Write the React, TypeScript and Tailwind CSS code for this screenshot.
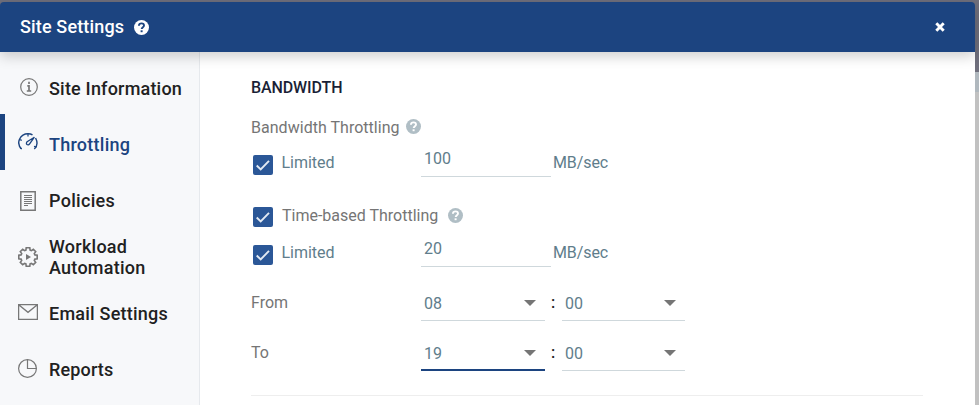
import { FC, ReactNode } from "react";

interface NavItemProps {
  label: string;
  icon: ReactNode;
  spacing: string;
  active?: boolean;
}

const InfoIcon = () => (
  <svg width="18" height="18" viewBox="0 0 18 18" fill="none" stroke="#777" className="ml-0.5 mt-px">
    <circle cx="9" cy="9" r="8.3" strokeWidth="1.2" />
    <path d="M9 3.800v2.100M7.300 7.800H9v5.200M6.800 13h4.400" strokeWidth="1.700" />
  </svg>
);

const GaugeIcon = () => (
  <svg width="20" height="18" viewBox="0 0 20 18" fill="none" stroke="#1c4480" strokeWidth="1.4">
    <path d="M3.600 16C1 13.500 0 9.800 1.500 6.200 3.400 2.300 7 .7 10 .7c1.800 0 3.300.4 4.500 1.200M17.600 5c1.800 3.600 2 8-1.300 11" />
    <path d="M10 .8v2.700M1.500 6.500l2.300.9M16 13.300l2.400.8M3.800 15.800l-1.800-.8" strokeWidth="1.200" />
    <path d="M16.400 4.200 11.800 10.700c-.8 1.200-2 1.400-2.800.8-.9-.7-.7-1.900.1-2.800z" strokeWidth="1.300" />
  </svg>
);

const DocIcon = () => (
  <svg width="16" height="20" viewBox="0 0 16 20" fill="none" stroke="#777" className="ml-0.5 mt-1.5">
    <path d="M.8.8h14.400v18.400H.8z" strokeWidth="1.500" />
    <path d="M4 4.500h8M4 6.500h8M4 8.500h8M4 10.500h8M4 12.500h8M4 14.500h4" strokeWidth="1" />
  </svg>
);

const GearIcon = () => (
  <svg width="20" height="20" viewBox="0 0 20 20" fill="none" stroke="#777" strokeWidth="1.600" className="mt-1.5">
    <path d="M8.200.8h3.600l.3 2.300 1.300.6 1.900-1.400 2.400 2.400-1.400 1.900.6 1.300 2.300.3v3.600l-2.300.3-.6 1.300 1.400 1.900-2.400 2.400-1.900-1.400-1.300.6-.3 2.300H8.200l-.3-2.300-1.300-.6-1.900 1.400-2.400-2.400 1.400-1.900-.6-1.300-2.300-.3V8.200l2.300-.3.6-1.300-1.400-1.900 2.400-2.400 1.900 1.400 1.300-.6z" />
    <path d="M8 7v6l5-3z" fill="#777" stroke="none" />
  </svg>
);

const MailIcon = () => (
  <svg width="20" height="16" viewBox="0 0 20 16" fill="none" stroke="#777" strokeWidth="1.300" className="mt-1">
    <path d="M.6.6h18.800v14.800H.6zM1 1l9 7.300L19 1" />
  </svg>
);

const PieIcon = () => (
  <svg width="19" height="19" viewBox="0 0 19 19" fill="none" stroke="#777" strokeWidth="1.200" className="mt-1">
    <circle cx="9.500" cy="9.500" r="8.900" />
    <path d="M9.500.5v9h9" />
  </svg>
);

const HelpIcon: FC<{ light?: boolean }> = ({ light }) => (
  <svg width="15" height="15" viewBox="0 0 15 15" fill="none">
    <circle cx="7.500" cy="7.500" r="7.500" fill={light ? "#fff" : "#b0bec5"} />
    <path
      d="M4.900 5.700c.1-1.500 1.200-2.300 2.600-2.300s2.500.8 2.500 2c0 1.800-2.300 1.700-2.300 3.700"
      stroke={light ? "#1c4480" : "#fff"}
      strokeWidth="1.900"
    />
    <path d="M6.600 10.300h2v1.900h-2z" fill={light ? "#1c4480" : "#fff"} />
  </svg>
);

const NavItem: FC<NavItemProps> = ({ label, icon, spacing, active }) => (
  <li
    className={`flex h-14 items-center border-l-[5px] ${
      active ? "border-[#1c4480] text-[#1c4480]" : "border-transparent text-[#212121]"
    }`}
  >
    <span className="ml-[13px] flex w-5 shrink-0">{icon}</span>
    <span className={`ml-[11px] mt-[5px] w-[142px] text-lg leading-[21px] font-medium ${spacing}`}>{label}</span>
  </li>
);

const Checkbox = () => (
  <span className="flex h-5 w-5 shrink-0 rounded-xs bg-[#2b5797]">
    <svg width="20" height="20" viewBox="0 0 20 20" fill="none">
      <path d="M3.700 10.500l4 4 8.300-8.700" stroke="#e3eaf3" strokeWidth="1.900" />
    </svg>
  </span>
);

const LimitRow: FC<{ value: string }> = ({ value }) => (
  <div className="flex h-[30px] text-[#607d8b]">
    <div className="flex w-[170px] pl-[2.4px]">
      <div className="mt-2">
        <Checkbox />
      </div>
      <span className="ml-2 mt-[5px]">Limited</span>
    </div>
    <div className="w-[130px] border-b border-[#cfd8dc] pl-[3px] pt-px">{value}</div>
    <span className="ml-[2px] mt-[5px] tracking-[-0.1px]">MB/sec</span>
  </div>
);

const Select: FC<{ value: string; width: string; focused?: boolean }> = ({ value, width, focused }) => (
  <div
    className={`flex h-[30px] justify-between pl-[3px] pr-[9.500px] text-[#607d8b] ${width} ${
      focused ? "border-b-2 border-[#1c4480]" : "border-b border-[#cfd8dc]"
    }`}
  >
    <span className="mt-0.5">{value}</span>
    <svg width="12" height="6" viewBox="0 0 12 6" className="mt-[9px]">
      <path d="M0 0h12L6 6z" fill="#757575" />
    </svg>
  </div>
);

const TimeRow: FC<{ label: string; hour: string; focused?: boolean }> = ({ label, hour, focused }) => (
  <div className="flex h-[50px]">
    <span className="w-[170px] pt-px text-[#757575]">{label}</span>
    <Select value={hour} width="w-[124px]" focused={focused} />
    <span className="w-[17px] pl-[6px] pt-px font-medium text-[#212121]">:</span>
    <Select value="00" width="w-[123px]" />
  </div>
);

const App = () => {
  return (
    <div className="flex h-[405px] w-[979px] overflow-hidden bg-[#6f6f7c] pt-0.5 font-['Roboto',sans-serif] text-base leading-[22px]">
      <div className="flex w-[975px] flex-col">
        <header className="z-10 flex h-[50px] shrink-0 items-center rounded-t-sm bg-[#1c4480] pl-5 pr-[30px] text-white shadow-[0_4px_14px_rgba(0,0,0,0.2)]">
          <h1 className="w-[114px] text-lg font-medium tracking-[0.15px]">Site Settings</h1>
          <HelpIcon light />
          <svg width="10" height="10" viewBox="0 0 10 10" className="ml-auto">
            <path d="M1.300 1.300l7.400 7.400M8.700 1.300l-7.400 7.400" stroke="#fff" strokeWidth="2.900" />
          </svg>
        </header>
        <div className="flex flex-1 bg-white">
          <nav className="w-[200px] border-r border-[#e6e9ed] bg-[#f7f8fa] pt-1.5">
            <ul>
              <NavItem label="Site Information" icon={<InfoIcon />} spacing="tracking-[0.2px]" />
              <NavItem label="Throttling" icon={<GaugeIcon />} spacing="tracking-[0.25px]" active />
              <NavItem label="Policies" icon={<DocIcon />} spacing="tracking-[0.3px]" />
              <NavItem label="Workload Automation" icon={<GearIcon />} spacing="tracking-[0.25px]" />
              <NavItem label="Email Settings" icon={<MailIcon />} spacing="tracking-[0.22px] pt-0.5" />
              <NavItem label="Reports" icon={<PieIcon />} spacing="tracking-[0.15px] pt-0.5" />
            </ul>
          </nav>
          <main className="ml-[51px] w-[672px] pt-[25px]">
            <h2 className="h-[39px] font-medium tracking-[-0.1px] text-[#1a1f36]">BANDWIDTH</h2>
            <div className="flex h-[31px] text-[#757575]">
              <span className="w-[155px] pt-px tracking-[0.03px]">Bandwidth Throttling</span>
              <span className="mt-[3px]">
                <HelpIcon />
              </span>
            </div>
            <LimitRow value="100" />
            <div className="flex h-[60px] pl-[2.4px] pt-[30px] text-[#757575]">
              <Checkbox />
              <span className="ml-[8.600px] -mt-0.5 w-[166px]">Time-based Throttling</span>
              <span className="mt-px">
                <HelpIcon />
              </span>
            </div>
            <LimitRow value="20" />
            <div className="mt-6 h-[105px] border-b border-[#eee]">
              <TimeRow label="From" hour="08" />
              <TimeRow label="To" hour="19" focused />
            </div>
          </main>
        </div>
      </div>
      <div className="flex w-1 flex-col pt-[70px]">
        <div className="h-5 bg-[#b0b8be]" />
        <div className="flex-1 bg-[#c1c1c1]" />
      </div>
    </div>
  );
};

export default App;
